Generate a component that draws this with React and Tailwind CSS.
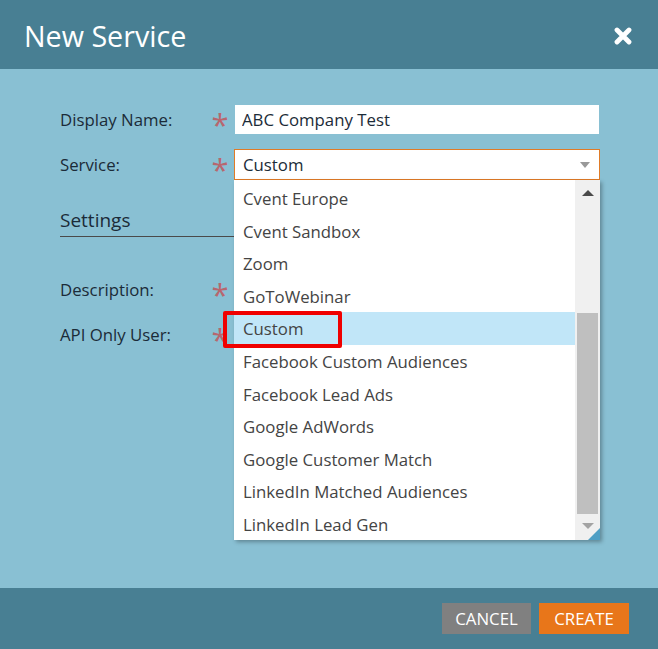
import React from 'react';

const options = [
  'Cvent Europe',
  'Cvent Sandbox',
  'Zoom',
  'GoToWebinar',
  'Custom',
  'Facebook Custom Audiences',
  'Facebook Lead Ads',
  'Google AdWords',
  'Google Customer Match',
  'LinkedIn Matched Audiences',
  'LinkedIn Lead Gen',
];

const Star = () => (
  <span className="w-[28px] -mt-[2px] text-center text-[#b8666e] text-[31px] leading-none h-[20px] font-['Open_Sans',sans-serif]">*</span>
);

const Row = ({ label, className, children }) => (
  <div className={`flex items-center ${className}`}>
    <label className="w-[146px] text-[#1b2b38]">{label}</label>
    <Star />
    {children}
  </div>
);

const App = () => {
  return (
    <div className="relative w-[658px] h-[649px] overflow-hidden flex flex-col bg-[#89c0d3] font-['Open_Sans',sans-serif] text-[16.8px]">
      <header className="h-[69px] shrink-0 bg-[#487f93] flex items-center justify-between pl-[24px] pr-[26px]">
        <h1 className="text-[28.7px] text-white mt-[2px]">New Service</h1>
        <svg width="18" height="18" viewBox="0 0 18 18" className="mt-[2px]">
          <path d="M3 3 L15 15 M15 3 L3 15" stroke="#fff" strokeWidth="4.8" strokeLinecap="round" />
        </svg>
      </header>

      <main className="relative flex-1 pl-[60px] pt-[36px]">
        <Row label="Display Name:" className="h-[29px]">
          <input
            readOnly
            value="ABC Company Test"
            className="w-[364px] h-[29px] ml-[1px] px-[7px] bg-white text-[#1b2b38] outline-none"
          />
        </Row>
        <Row label="Service:" className="h-[31px] mt-[15px]">
          <div className="w-[366px] h-[31px] border border-[#e07b27] bg-white flex items-center justify-between pl-[8px] pr-[9px] text-[#1b2b38]">
            <span>Custom</span>
            <span className="w-0 h-0 border-x-[5px] border-x-transparent border-t-[6px] border-t-[#999999]" />
          </div>
        </Row>
        <div className="w-[174px] h-[32px] mt-[25px] border-b border-[#4a4a4a] text-[19px] text-[#1b2b38] leading-[30px]">
          Settings
        </div>
        <Row label="Description:" className="h-[29px] mt-[38px]">
          <span />
        </Row>
        <Row label="API Only User:" className="h-[29px] mt-[16px]">
          <span />
        </Row>

        {/* open select list, sits over the form */}
        <div className="absolute left-[234px] top-[111px] w-[366px] h-[360px] bg-white flex shadow-[2px_2px_4px_rgba(0,0,0,0.3)]">
          <ul className="w-[341px] pt-[2px] text-[#444444]">
            {options.map((opt) => (
              <li
                key={opt}
                className={`h-[32.6px] leading-[33.4px] pl-[9px] ${opt === 'Custom' ? 'bg-[#c1e6f8]' : ''}`}
              >
                {opt}
              </li>
            ))}
          </ul>
          <div className="relative w-[25px] bg-[#f0f0f0] flex flex-col items-center">
            <span className="mt-[10px] w-0 h-0 border-x-[6px] border-x-transparent border-b-[6px] border-b-[#4a4a4a]" />
            <div className="w-[21px] h-[201px] mt-[117px] bg-[#bfbfbf]" />
            <span className="mt-[9px] w-0 h-0 border-x-[6px] border-x-transparent border-t-[6px] border-t-[#a3a3a3]" />
            <span className="absolute right-0 bottom-0 w-0 h-0 border-l-[12px] border-l-transparent border-b-[12px] border-b-[#4f9fc4]" />
          </div>
        </div>

        {/* red annotation box */}
        <div className="absolute left-[223px] top-[242px] w-[119px] h-[37px] border-[4px] border-[#f00000] rounded-[2px]" />
      </main>

      <footer className="h-[61px] shrink-0 bg-[#487f93] flex justify-end gap-[8px] pt-[15px] pr-[29px]">
        <button className="w-[89px] h-[31px] bg-[#808080] text-white">CANCEL</button>
        <button className="w-[90px] h-[31px] bg-[#e8761a] text-white">CREATE</button>
      </footer>
    </div>
  );
};

export default App;
